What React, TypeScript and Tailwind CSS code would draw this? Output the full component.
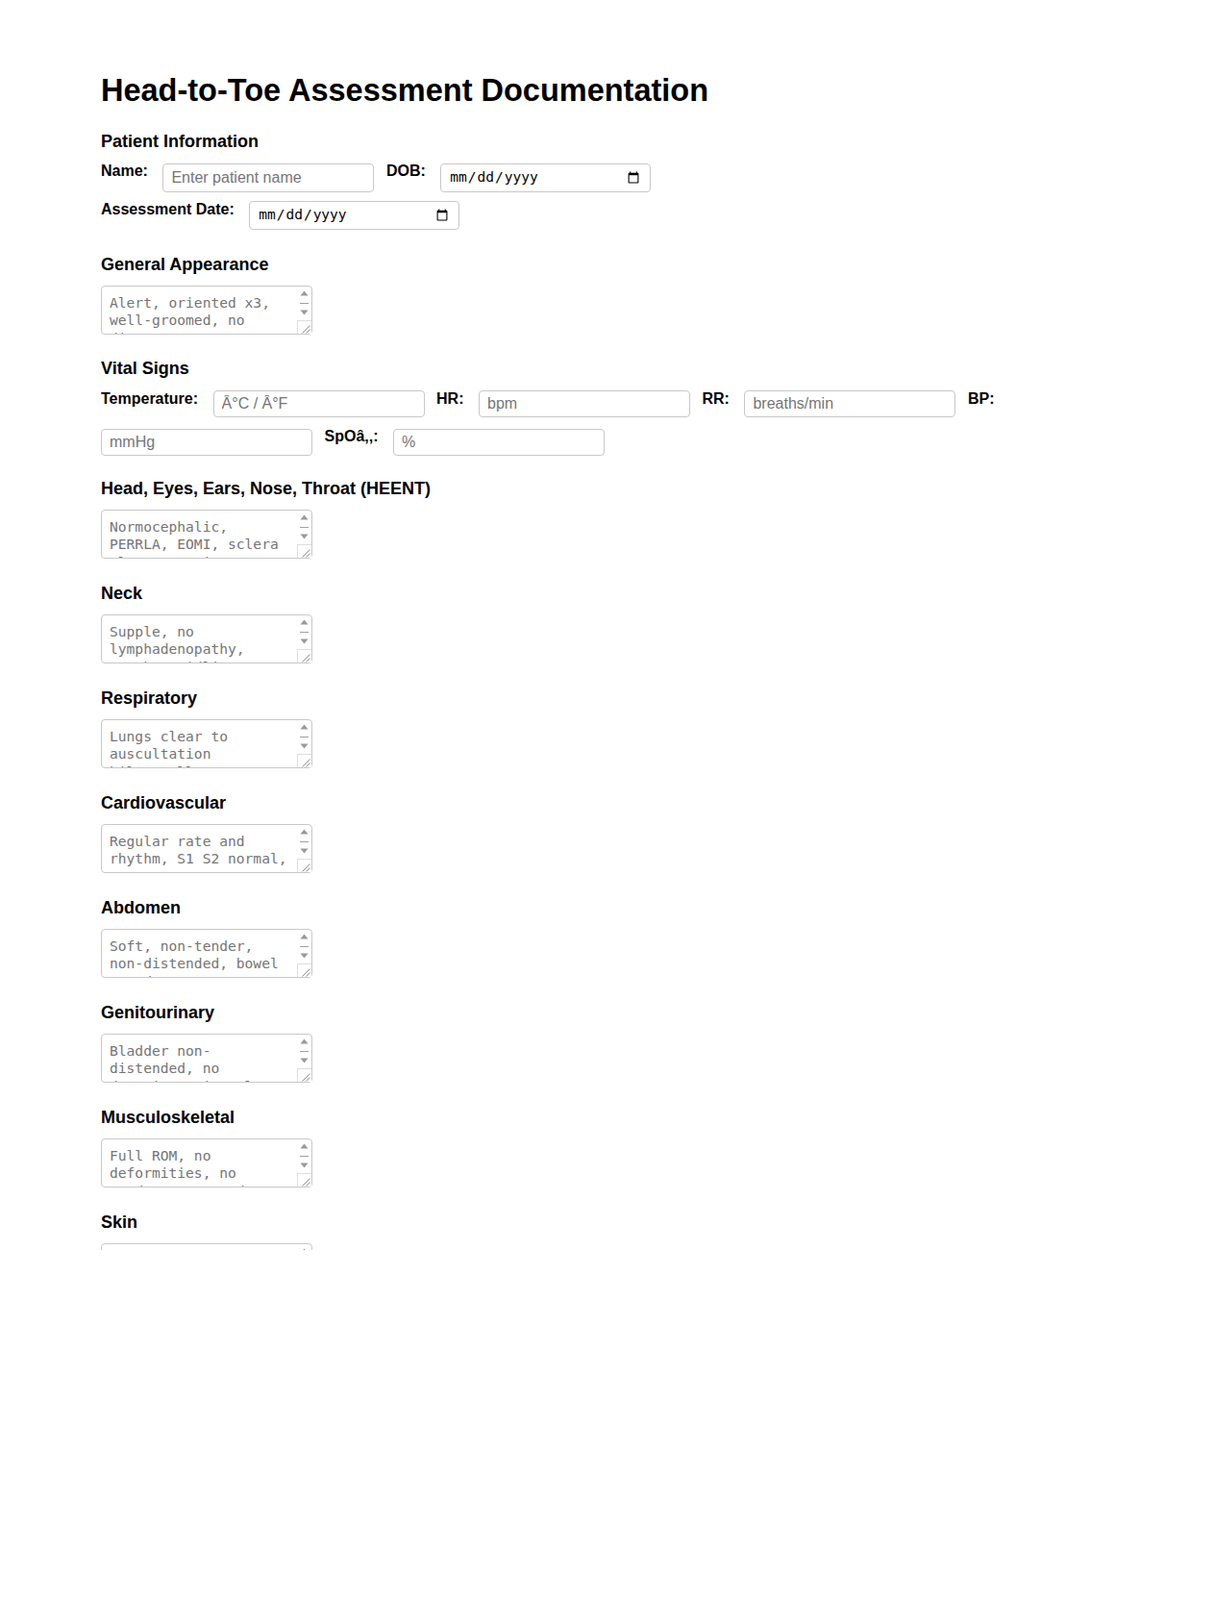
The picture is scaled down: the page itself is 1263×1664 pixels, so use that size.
import React from "react";

const labelCls = "text-[16px] font-bold leading-[18.4px] mr-[15.5px] whitespace-nowrap";
const inputCls =
  "mt-[0.7px] w-[220px] border border-[#c8c8c8] rounded-[4px] px-[8px] text-[16px] leading-[normal] text-black placeholder:text-[#757575] bg-white font-['Liberation_Sans',Arial,sans-serif] outline-none";
const dateCls =
  "mt-[0.7px] w-[219px] h-[30px] border border-[#c8c8c8] rounded-[4px] px-[8px] text-[14.5px] text-black bg-white font-['DejaVu_Sans_Mono',monospace] outline-none";
const taCls =
  "block w-[220px] h-[51px] border border-[#c8c8c8] rounded-[4px] pl-[8px] pr-[23px] pt-[8px] pb-[4px] text-[14.6px] leading-[18.7px] font-['DejaVu_Sans_Mono',monospace] placeholder:text-[#757575] overflow-hidden resize-none bg-white outline-none";
const h3Cls = "text-[18px] font-bold leading-[21.5px]";

const sections: [string, string][] = [
  ["Head, Eyes, Ears, Nose, Throat (HEENT)", "Normocephalic, PERRLA, EOMI, sclera clear, TMs intact, oral mucosa moist"],
  ["Neck", "Supple, no lymphadenopathy, trachea midline"],
  ["Respiratory", "Lungs clear to auscultation bilaterally, no wheezes"],
  ["Cardiovascular", "Regular rate and rhythm, S1 S2 normal, no murmurs"],
  ["Abdomen", "Soft, non-tender, non-distended, bowel sounds present x4"],
  ["Genitourinary", "Bladder non-distended, no dysuria, urine clear"],
  ["Musculoskeletal", "Full ROM, no deformities, no tenderness or edema"],
  ["Skin", "Warm, dry, intact, no lesions or rashes"],
];

function Area({ ph, className = "" }: { ph: string; className?: string }) {
  return (
    <div className={`relative w-[220px] h-[51px] ${className}`}>
      <textarea className={taCls} placeholder={ph} />
      {/* classic scrollbar drawing */}
      <svg
        width="15"
        height="35"
        viewBox="0 0 15 35"
        className="pointer-events-none absolute right-[1px] top-[1px]"
      >
        <polygon points="3.5,9.5 11.5,9.5 7.5,4.5" fill="#999999" />
        <rect x="3" y="17" width="9" height="1" fill="#a0a0a0" />
        <polygon points="3.5,24.5 11.5,24.5 7.5,29.5" fill="#999999" />
      </svg>
      <div className="pointer-events-none absolute right-[1px] bottom-[1px] w-[15px] h-[14px] border-l border-t border-[#dedede] bg-white">
        <svg width="14" height="13" viewBox="0 0 14 13" className="absolute left-0 top-0">
          <line x1="12.5" y1="4.5" x2="4.5" y2="12.5" stroke="#8f8f8f" strokeWidth="1" />
          <line x1="12.5" y1="8.5" x2="8.5" y2="12.5" stroke="#8f8f8f" strokeWidth="1" />
        </svg>
      </div>
    </div>
  );
}

export default function App() {
  return (
    <div className="h-[1300px] overflow-hidden bg-white text-black font-['Liberation_Sans',Arial,sans-serif]">
      <div className="w-[1050px] ml-[105px] pt-[76px]">
        <h1 className="text-[32.5px] font-bold leading-[37px]">Head-to-Toe Assessment Documentation</h1>

        <h3 className={`${h3Cls} mt-[24.2px]`}>Patient Information</h3>
        <div className="mt-[10.7px] flex flex-wrap items-start">
          <label className={labelCls}>Name:</label>
          <input type="text" placeholder="Enter patient name" className={`${inputCls} h-[29.5px] mr-[12.5px]`} />
          <label className={labelCls}>DOB:</label>
          <input type="date" className={`${dateCls} mr-[12.5px]`} />
        </div>
        <div className="mt-[8.5px] flex flex-wrap items-start">
          <label className={labelCls}>Assessment Date:</label>
          <input type="date" className={dateCls} />
        </div>

        <h3 className={`${h3Cls} mt-[25.5px]`}>General Appearance</h3>
        <Area className="mt-[10.5px]" ph="Alert, oriented x3, well-groomed, no distress" />

        <h3 className={`${h3Cls} mt-[25.5px]`}>Vital Signs</h3>
        <div className="mt-[11px] flex flex-wrap items-start gap-y-[11.5px]">
          <label className={labelCls}>Temperature:</label>
          <input type="text" placeholder="Â°C / Â°F" className={`${inputCls} h-[27.5px] mr-[12.5px]`} />
          <label className={labelCls}>HR:</label>
          <input type="text" placeholder="bpm" className={`${inputCls} h-[27.5px] mr-[12.5px]`} />
          <label className={labelCls}>RR:</label>
          <input type="text" placeholder="breaths/min" className={`${inputCls} h-[27.5px] mr-[12.5px]`} />
          <label className={labelCls}>BP:</label>
          <input type="text" placeholder="mmHg" className={`${inputCls} h-[27.5px] mr-[12.5px]`} />
          <label className={labelCls}>SpOâ‚‚:</label>
          <input type="text" placeholder="%" className={`${inputCls} h-[27.5px] mr-[12.5px]`} />
        </div>

        {sections.map(([title, ph], i) => (
          <div key={title}>
            <h3 className={`${h3Cls} ${i === 0 ? "mt-[24.4px]" : "mt-[26.5px]"}`}>{title}</h3>
            <Area className="mt-[10px]" ph={ph} />
          </div>
        ))}
      </div>
    </div>
  );
}
